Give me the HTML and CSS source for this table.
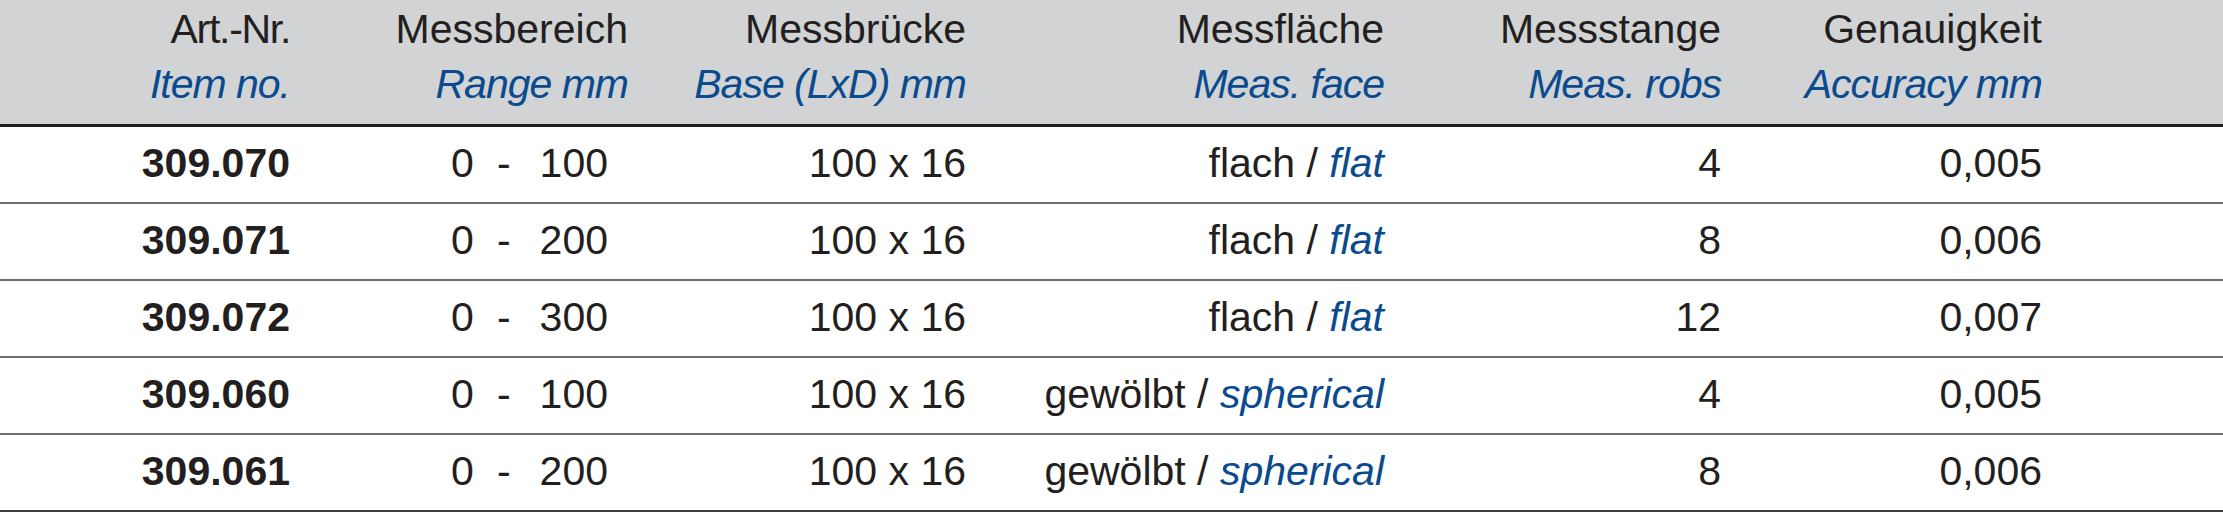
FILE: index.html
```html
<!DOCTYPE html>
<html lang="de">
<head>
<meta charset="utf-8">
<title>Messbrücken</title>
<link rel="stylesheet" href="styles.css">
</head>
<body>
<div class="table">
  <div class="row head">
    <div class="cell"><div class="de tight">Art.-Nr.</div><div class="en">Item no.</div></div>
    <div class="cell"><div class="de">Messbereich</div><div class="en">Range mm</div></div>
    <div class="cell"><div class="de">Messbrücke</div><div class="en">Base (LxD) mm</div></div>
    <div class="cell"><div class="de">Messfläche</div><div class="en">Meas. face</div></div>
    <div class="cell"><div class="de">Messstange</div><div class="en">Meas. robs</div></div>
    <div class="cell"><div class="de">Genauigkeit</div><div class="en">Accuracy mm</div></div>
    <div></div>
  </div>
  <div class="row data">
    <div class="cell num">309.070</div>
    <div class="cell range"><span>0</span><span class="dash">-</span><span>100</span></div>
    <div class="cell">100 x 16</div>
    <div class="cell">flach / <span class="en">flat</span></div>
    <div class="cell">4</div>
    <div class="cell">0,005</div>
    <div></div>
  </div>
  <div class="row data">
    <div class="cell num">309.071</div>
    <div class="cell range"><span>0</span><span class="dash">-</span><span>200</span></div>
    <div class="cell">100 x 16</div>
    <div class="cell">flach / <span class="en">flat</span></div>
    <div class="cell">8</div>
    <div class="cell">0,006</div>
    <div></div>
  </div>
  <div class="row data">
    <div class="cell num">309.072</div>
    <div class="cell range"><span>0</span><span class="dash">-</span><span>300</span></div>
    <div class="cell">100 x 16</div>
    <div class="cell">flach / <span class="en">flat</span></div>
    <div class="cell">12</div>
    <div class="cell">0,007</div>
    <div></div>
  </div>
  <div class="row data">
    <div class="cell num">309.060</div>
    <div class="cell range"><span>0</span><span class="dash">-</span><span>100</span></div>
    <div class="cell">100 x 16</div>
    <div class="cell">gewölbt / <span class="en">spherical</span></div>
    <div class="cell">4</div>
    <div class="cell">0,005</div>
    <div></div>
  </div>
  <div class="row data last">
    <div class="cell num">309.061</div>
    <div class="cell range"><span>0</span><span class="dash">-</span><span>200</span></div>
    <div class="cell">100 x 16</div>
    <div class="cell">gewölbt / <span class="en">spherical</span></div>
    <div class="cell">8</div>
    <div class="cell">0,006</div>
    <div></div>
  </div>
</div>
</body>
</html>
```
FILE: styles.css
```css
html, body {
  margin: 0;
  padding: 0;
  background: #ffffff;
}

body {
  font-family: "Liberation Sans", Arial, sans-serif;
  font-size: 41px;
  color: #231f20;
}

.table {
  width: 2223px;
}

.row {
  display: grid;
  grid-template-columns: 290px 338px 338px 418px 337px 321px 1fr;
  box-sizing: border-box;
}

.cell {
  text-align: right;
  white-space: nowrap;
}

.head {
  background: #d1d3d4;
  height: 127px;
  padding: 2px 0 12px;
  line-height: 55px;
  border-bottom: 3px solid #231f20;
}

.en {
  font-style: italic;
  color: #0a4a8e;
}

.head .en {
  letter-spacing: -1px;
}

.head .tight {
  letter-spacing: -1.3px;
}

.data {
  height: 77px;
  line-height: 72px;
  padding-bottom: 3px;
  border-bottom: 2px solid #6d6e71;
}

.data.last {
  border-bottom-color: #3d3b3c;
}

.num {
  font-weight: bold;
}

.range {
  padding-right: 20px;
}

.dash {
  margin: 0 29px 0 23px;
}
```
